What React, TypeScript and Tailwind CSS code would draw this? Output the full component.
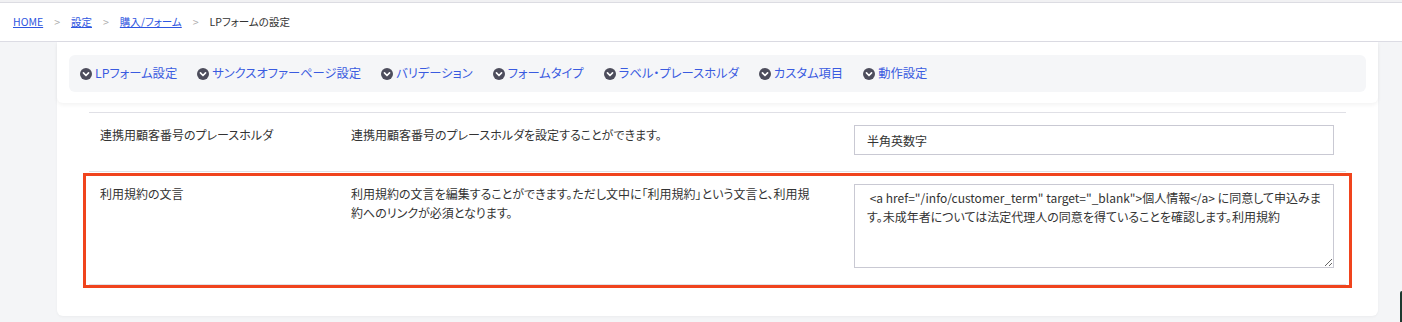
import { useState } from "react";

const TABS = [
  "LPフォーム設定",
  "サンクスオファーページ設定",
  "バリデーション",
  "フォームタイプ",
  "ラベル・プレースホルダ",
  "カスタム項目",
  "動作設定",
];

const TERM_TEXT =
  ' <a href="/info/customer_term" target="_blank">個人情報</a> に同意して申込みます。未成年者については法定代理人の同意を得ていることを確認します。利用規約';

function CircleChevron() {
  return (
    <svg width="12" height="12" viewBox="0 0 16 16" className="shrink-0">
      <circle cx="8" cy="8" r="8" fill="#4d4d5c" />
      <path
        d="M4.6 6.6 8 10l3.4-3.4"
        fill="none"
        stroke="#fff"
        strokeWidth="2.2"
        strokeLinecap="round"
        strokeLinejoin="round"
      />
    </svg>
  );
}

export default function App() {
  const [placeholder, setPlaceholder] = useState("半角英数字");
  const [term, setTerm] = useState(TERM_TEXT);

  return (
    <div className="min-h-[322px] bg-[#f4f5f7] text-[#333] [font-family:'Noto_Sans_CJK_JP','Noto_Sans',sans-serif] [font-feature-settings:'palt'] relative">
      {/* header / breadcrumb */}
      <div className="h-[3px] bg-[#f1f1f3] border-b border-[#dcdce2]" />
      <div className="h-[39px] bg-white border-b border-[#dcdce4] flex items-center pl-[13px] text-[10.5px]">
        <a className="text-[#2f56e0] underline">HOME</a>
        <span className="mx-[11px] text-[#aaa]">&gt;</span>
        <a className="text-[#2f56e0] underline">設定</a>
        <span className="mx-[11px] text-[#aaa]">&gt;</span>
        <a className="text-[#2f56e0] underline">購入/フォーム</a>
        <span className="mx-[11px] text-[#aaa]">&gt;</span>
        <span className="text-[#333]">LPフォームの設定</span>
      </div>

      {/* card */}
      <div className="ml-[57px] w-[1321px] bg-white rounded-b-[6px] shadow-[0_1px_3px_rgba(0,0,0,0.04)] pb-[31px]">
        <div className="px-[12px] pt-[13px] pb-[11px] rounded-b-[6px] shadow-[0_2px_4px_rgba(0,0,0,0.05)]">
          <div className="h-[37px] bg-[#f5f6f8] rounded-[6px] flex items-center pl-[11px] gap-[20px] text-[12.3px] text-[#3a5be0]">
            {TABS.map((t) => (
              <a key={t} className="flex items-center gap-[3px] cursor-pointer">
                <CircleChevron />
                {t}
              </a>
            ))}
          </div>
        </div>

        <div className="mx-[32px] mt-[9px] border-t border-[#e0e0e6] text-[12px] leading-[19px]">
          <div className="grid grid-cols-[251px_503px_502px] border-b border-[#e0e0e6]">
            <div className="px-[11px] pt-[12px] pb-[16px]">連携用顧客番号のプレースホルダ</div>
            <div className="pl-[11px] pr-[24px] pt-[12px] pb-[16px]">
              連携用顧客番号のプレースホルダを設定することができます。
            </div>
            <div className="px-[11px] pt-[12px] pb-[16px]">
              <input
                value={placeholder}
                onChange={(e) => setPlaceholder(e.target.value)}
                className="w-full h-[30px] border border-[#c9c9d3] px-[12px] text-[12px] outline-none"
              />
            </div>
          </div>

          <div className="relative grid grid-cols-[251px_503px_502px] border-b border-[#e0e0e6]">
            <div className="px-[11px] pt-[12px] pb-[16px]">利用規約の文言</div>
            <div className="pl-[11px] pr-[24px] pt-[12px] pb-[16px]">
              利用規約の文言を編集することができます。ただし文中に「利用規約」という文言と、利用規約へのリンクが必須となります。
            </div>
            <div className="px-[11px] pt-[12px] pb-[16px]">
              <textarea
                value={term}
                onChange={(e) => setTerm(e.target.value)}
                className="block w-full h-[84px] border border-[#c9c9d3] px-[12px] pt-[3px] text-[12px] leading-[19px] outline-none resize-y"
              />
            </div>
            {/* highlight annotation */}
            <div className="absolute -left-[6px] -right-[6px] top-[1px] -bottom-[4px] border-[3px] border-[#f0441d] pointer-events-none" />
          </div>
        </div>
      </div>

      <div className="absolute right-0 top-[291px] w-[2px] h-[31px] bg-[#1d3a30] rounded-tl-[2px]" />
    </div>
  );
}
